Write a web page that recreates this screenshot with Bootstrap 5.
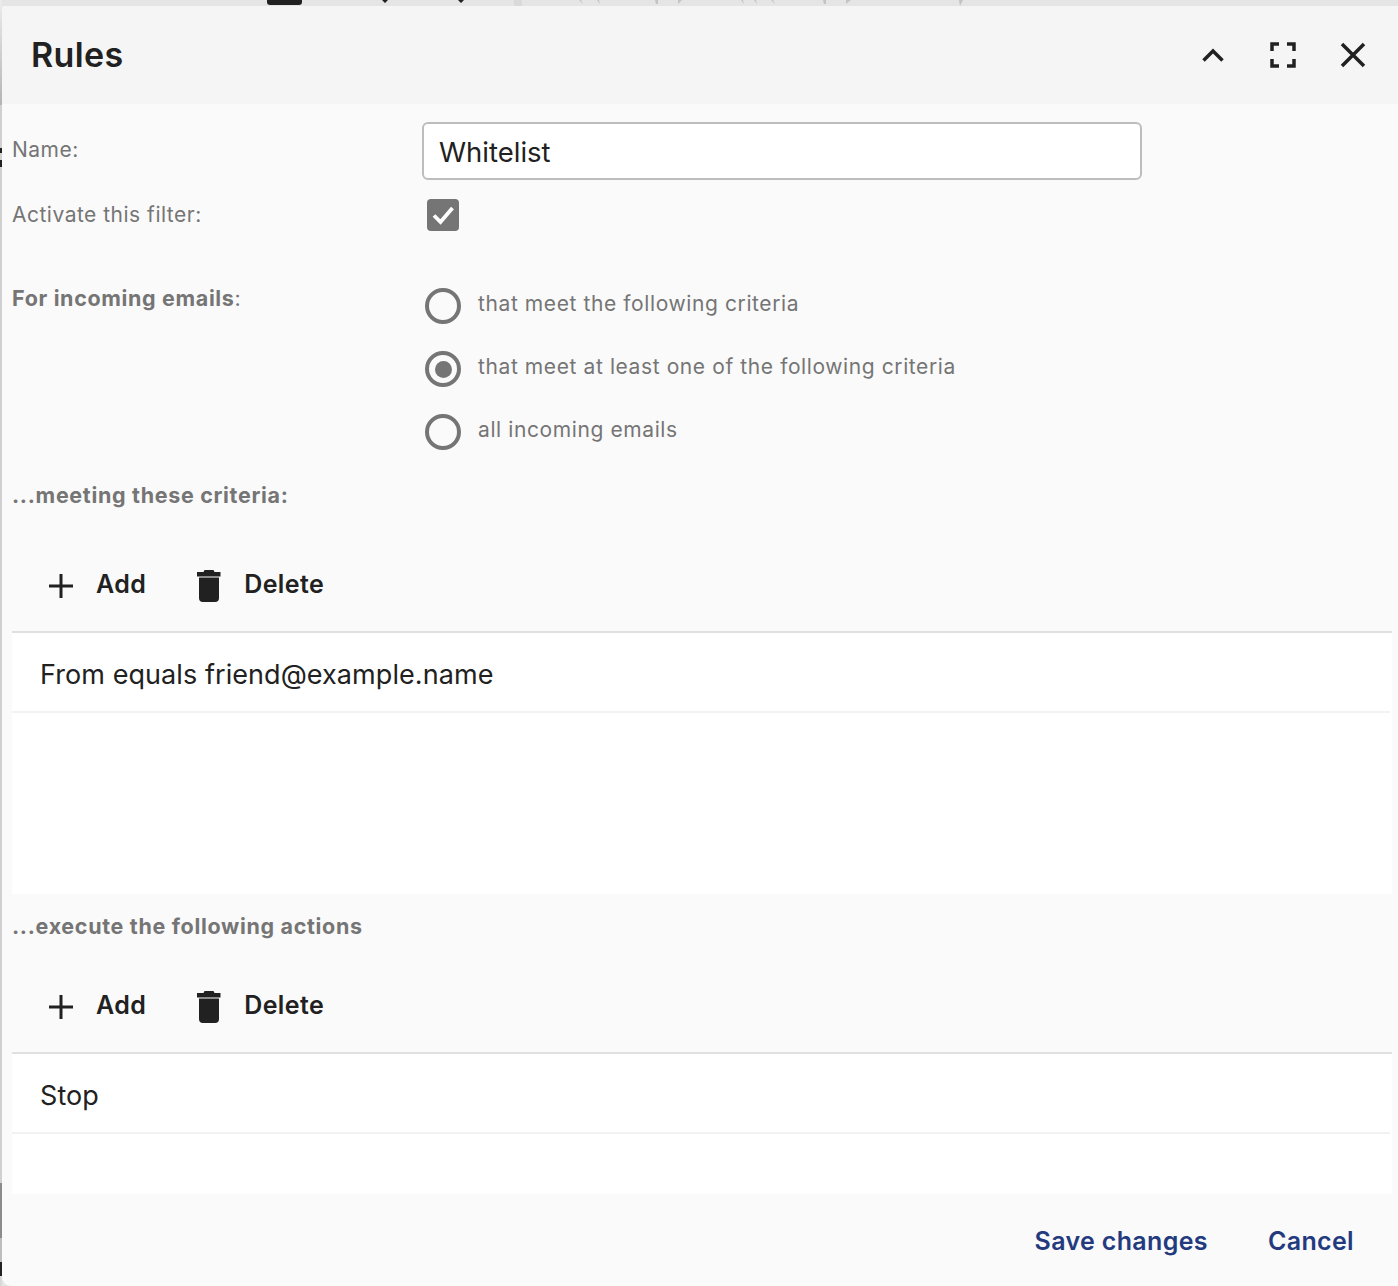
<!DOCTYPE html>
<html lang="en">
<head>
    <meta charset="UTF-8">
    <meta name="viewport" content="width=device-width, initial-scale=1.0">
    <title>Rules</title>
    <link href="https://cdn.jsdelivr.net/npm/bootstrap@5.3.0/dist/css/bootstrap.min.css" rel="stylesheet">
    <style>
        html, body { height: 1286px; overflow: hidden; }
        body { background: #e5e5e5; font-family: Inter, "Liberation Sans", sans-serif; color: #212121; padding: 6px 0 0 2px; }
        .top-peek { position: absolute; top: 0; left: 0; display: block; }
        .left-peek { position: absolute; top: 0; left: 0; width: 2px; height: 1286px;
            background: linear-gradient(#ececec 0, #b4b4b4 105px, #d0d0d0 105px, #d0d0d0 148px, #222 148px, #222 153px, #d0d0d0 153px, #d0d0d0 160px, #222 160px, #222 167px, #d0d0d0 167px, #d0d0d0 1183px, #8c8c8c 1183px, #8c8c8c 1238px, #bdbdbd 1238px, #bdbdbd 1262px, #222 1262px, #222 1276px, #d8d8d8 1276px); }
        .rules-dialog { position: relative; height: 1280px; background: #fafafa; border: 0; border-radius: 3px 0 0 9px; display: flex; flex-direction: column; overflow: hidden; }
        .rules-head { height: 98px; flex: none; background: #f5f5f5; padding: 0 25px 0 29px; }
        .rules-head h1 { font-size: 34px; font-weight: 600; margin: 0; letter-spacing: .4px; }
        .head-btn { width: 40px; height: 40px; padding: 0; border: 0; background: none; margin-left: 30px; display: flex; align-items: center; justify-content: center; }
        .rules-body { padding: 18px 6px 0 10px; flex: 1 1 auto; }
        .field-label { width: 410px; flex: none; color: #757575; font-size: 21px; letter-spacing: .5px; }
        .name-input.form-control { width: 720px; height: 58px; border: 2px solid #bdbdbd; border-radius: 6px; font-size: 27.5px; color: #212121; padding: 1px 15px 0; background: #fff; box-shadow: none; }
        .row-name { height: 58px; align-items: center; }
        .row-name .field-label { margin-top: -2px; }
        .row-active { margin-top: 19px; height: 32px; }
        .check-box { margin-left: 5px; width: 32px; height: 32px; background: #757575; border-radius: 4px; display: flex; align-items: center; justify-content: center; }
        .row-mode { margin-top: 57px; }
        .row-mode .field-label { margin-top: -6px; font-size: 21.5px; letter-spacing: .65px; }
        .row-mode b { font-weight: 700; }
        .mode-list { gap: 27px; margin-left: 3px; }
        .mode-opt { height: 36px; gap: 17px; color: #757575; font-size: 21px; letter-spacing: .6px; }
        .mode-opt span { margin-top: -4px; }
        .radio-dot { width: 36px; height: 36px; flex: none; border: 4px solid #757575; border-radius: 50%; display: flex; align-items: center; justify-content: center; }
        .radio-dot i { display: block; width: 17px; height: 17px; background: #757575; border-radius: 50%; }
        .section-title { color: #757575; font-size: 21.5px; font-weight: 700; line-height: 30px; letter-spacing: .68px; }
        .title-criteria { margin-top: 30px; }
        .title-actions { margin-top: 17px; }
        .tool-bar { gap: 50px; padding-left: 36px; height: 94px; }
        .tool-criteria { margin-top: 27px; }
        .tool-actions { margin-top: 17px; }
        .tool-btn { border: 0; background: none; padding: 0; color: #212121; font-size: 25px; font-weight: 600; letter-spacing: .4px; display: flex; align-items: center; gap: 22px; line-height: 1; }
        .tool-btn svg { display: block; margin-top: 3px; }
        .rule-list { border-top: 2px solid #e0e0e0; background: #fff; border-radius: 0; }
        .rule-list .list-group-item { height: 80px; border: 0; border-bottom: 2px solid #f2f2f2; border-radius: 0; padding: 7px 0 0 28px; display: flex; align-items: center; font-size: 27px; letter-spacing: .07px; color: #212121; background: #fff; margin-right: 2px; }
        .list-criteria { height: 263px; }
        .list-actions { height: 142px; }
        .rules-foot { height: 92px; flex: none; padding: 4px 44px 0 0; gap: 60px; }
        .foot-btn { border: 0; background: none; padding: 0; color: #243a7f; font-size: 25px; font-weight: 600; letter-spacing: .35px; }
    </style>
</head>
<body>
    <svg class="top-peek" width="1398" height="6" viewBox="0 0 1398 6">
        <path d="M267 0h35v2a3 3 0 0 1-3 3h-29a3 3 0 0 1-3-3z" fill="#212121"/>
        <path d="M382 0h6l-3 3zM458 0h6l-3 3z" fill="#212121"/>
        <rect x="514" width="8" height="6" fill="#dadada"/>
        <path d="M579 0h2l2 4zM597 0h2l1 4zM655 0h3v4h-2zM678 0h4l-4 4zM741 0h2l1 4zM754 0h2l1 4zM771 0h2l2 4zM823 0h3v4h-2zM846 0h5l-5 4zM959 0h4l-3 6z" fill="#c4c4c4"/>
    </svg>
    <div class="left-peek"></div>
    <div class="rules-dialog">
        <div class="rules-head d-flex align-items-center">
            <h1 class="flex-grow-1">Rules</h1>
            <button class="head-btn" type="button" aria-label="Collapse">
                <svg width="24" height="24" viewBox="0 0 24 24"><path d="M2.500 17.500 12 8l9.500 9.500" fill="none" stroke="#212121" stroke-width="3.500"/></svg>
            </button>
            <button class="head-btn" type="button" aria-label="Fullscreen">
                <svg width="26" height="26" viewBox="0 0 26 26"><path d="M2 9V2h7M17 2h7v7M24 17v7h-7M9 24H2v-7" fill="none" stroke="#212121" stroke-width="3.500"/></svg>
            </button>
            <button class="head-btn" type="button" aria-label="Close">
                <svg width="26" height="26" viewBox="0 0 26 26"><path d="M2 2l22 22M24 2 2 24" fill="none" stroke="#212121" stroke-width="3.500"/></svg>
            </button>
        </div>
        <div class="rules-body">
            <div class="d-flex row-name">
                <div class="field-label">Name:</div>
                <input class="form-control name-input" type="text" value="Whitelist">
            </div>
            <div class="d-flex row-active">
                <div class="field-label">Activate this filter:</div>
                <div class="check-box">
                    <svg width="24" height="24" viewBox="0 0 24 24"><path d="M3 12.500 9.500 19 21.500 5" fill="none" stroke="#fff" stroke-width="3.800"/></svg>
                </div>
            </div>
            <div class="d-flex row-mode">
                <div class="field-label"><b>For incoming emails</b>:</div>
                <div class="d-flex flex-column mode-list">
                    <div class="d-flex align-items-center mode-opt"><div class="radio-dot"></div><span>that meet the following criteria</span></div>
                    <div class="d-flex align-items-center mode-opt"><div class="radio-dot"><i></i></div><span>that meet at least one of the following criteria</span></div>
                    <div class="d-flex align-items-center mode-opt"><div class="radio-dot"></div><span>all incoming emails</span></div>
                </div>
            </div>
            <div class="section-title title-criteria">...meeting these criteria:</div>
            <div class="d-flex align-items-center tool-bar tool-criteria">
                <button class="tool-btn" type="button">
                    <svg width="26" height="26" viewBox="0 0 26 26"><path d="M13 1v24M1 13h24" fill="none" stroke="#212121" stroke-width="3"/></svg>Add
                </button>
                <button class="tool-btn" type="button">
                    <svg width="26" height="32" viewBox="0 0 26 32"><path d="M8.500 0h9l1 2h6v4.500H1V2h6.500zM3 7.500h20V28a4 4 0 0 1-4 4H7a4 4 0 0 1-4-4z" fill="#212121"/></svg>Delete
                </button>
            </div>
            <div class="list-group rule-list list-criteria">
                <div class="list-group-item">From equals friend@example.name</div>
            </div>
            <div class="section-title title-actions">...execute the following actions</div>
            <div class="d-flex align-items-center tool-bar tool-actions">
                <button class="tool-btn" type="button">
                    <svg width="26" height="26" viewBox="0 0 26 26"><path d="M13 1v24M1 13h24" fill="none" stroke="#212121" stroke-width="3"/></svg>Add
                </button>
                <button class="tool-btn" type="button">
                    <svg width="26" height="32" viewBox="0 0 26 32"><path d="M8.500 0h9l1 2h6v4.500H1V2h6.500zM3 7.500h20V28a4 4 0 0 1-4 4H7a4 4 0 0 1-4-4z" fill="#212121"/></svg>Delete
                </button>
            </div>
            <div class="list-group rule-list list-actions">
                <div class="list-group-item">Stop</div>
            </div>
        </div>
        <div class="d-flex align-items-center justify-content-end rules-foot">
            <button class="foot-btn" type="button">Save changes</button>
            <button class="foot-btn" type="button">Cancel</button>
        </div>
    </div>
    <script src="https://cdn.jsdelivr.net/npm/bootstrap@5.3.0/dist/js/bootstrap.bundle.min.js"></script>
</body>
</html>
